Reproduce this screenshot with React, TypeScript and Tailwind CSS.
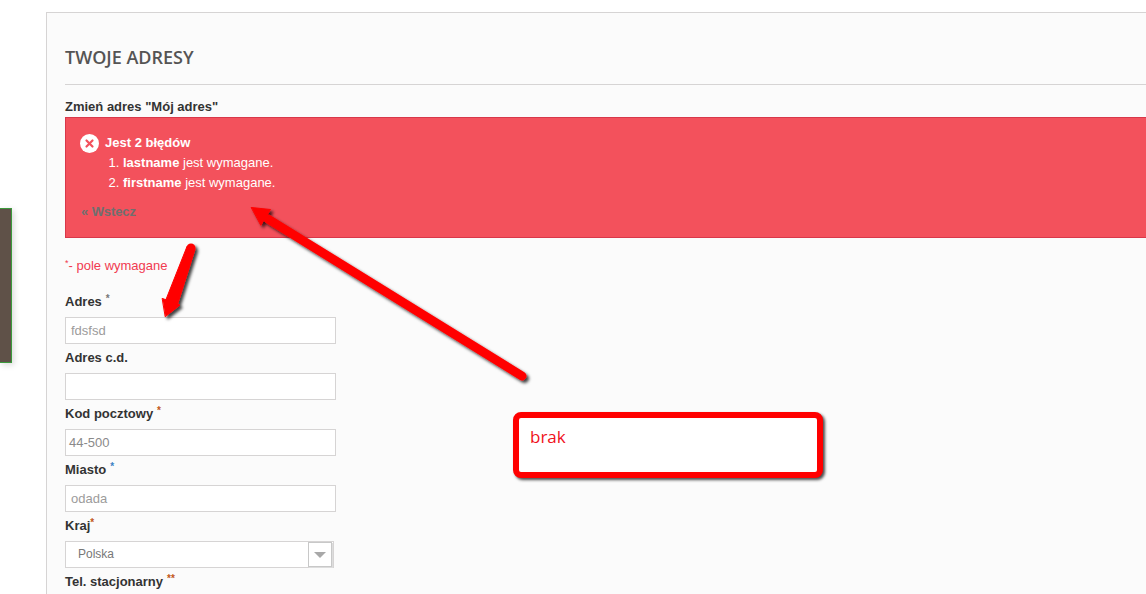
import React from 'react';

const labelClass = 'text-[13px] font-bold text-[#333] leading-[18px] h-[29px] pt-[5px]';
const inputClass = 'w-[271px] h-[27px] border border-[#d6d4d4] bg-white flex items-center text-[13px]';

const Star = ({ text = '*', color = 'text-[#f13340]', gap = 'ml-[4px]' }: { text?: string; color?: string; gap?: string }) => (
  <sup className={`${gap} ${color} text-[10px] font-bold leading-none align-[-1px]`}>{text}</sup>
);

const Field = ({ label, value, star, pad = 'pl-[5px]', tone = 'text-[#9c9b9b]' }: { label: string; value: string; star: React.ReactNode; pad?: string; tone?: string }) => (
  <div>
    <div className={labelClass}>
      {label}
      {star}
    </div>
    <div className={`${inputClass} ${pad} ${tone}`}>{value}</div>
  </div>
);

const Annotations = () => (
  <svg className="absolute left-0 top-0 pointer-events-none" width="1146" height="594" viewBox="0 0 1146 594">
    <defs>
      <filter id="sh" x="-20%" y="-20%" width="140%" height="140%">
        <feDropShadow dx="2.5" dy="2.5" stdDeviation="1.5" floodColor="#000" floodOpacity="0.75" />
      </filter>
    </defs>
    <g filter="url(#sh)" fill="#ff0000" stroke="#ff0000" strokeLinecap="round" strokeLinejoin="round">
      <path d="M522 376 L268 219" strokeWidth="9" fill="none" />
      <path d="M251.500 207.500 L270.500 209.500 L261 225 Z" strokeWidth="1" />
      <path d="M191 248 L195 249.500 L177 306 L165 302 L187 246.500 Z" strokeWidth="1" />
      <circle cx="191" cy="248" r="4.500" strokeWidth="0" />
      <path d="M162.500 298.500 L180 305 L165.500 316.500 Z" strokeWidth="1" />
    </g>
  </svg>
);

export default function App() {
  return (
    <div className="relative w-[1146px] h-[594px] overflow-hidden bg-white flex font-['Liberation_Sans',Arial,sans-serif]">
      {/* left edge of the neighbouring column */}
      <div className="w-[46px] shrink-0 pt-[208px]">
        <div className="w-[12px] h-[155px] bg-[#5f5148] border border-l-0 border-[#3c9a3c] shadow-[2px_2px_6px_rgba(0,0,0,0.15)]" />
      </div>

      <div className="mt-[12px] w-[1200px] h-[700px] shrink-0 border border-[#d6d4d4] bg-[#fbfbfb] pl-[18px]">
        <h1 className="h-[72px] border-b border-[#d6d4d4] pt-[32px] text-[18px] leading-[25px] font-semibold text-[#555454] font-['Open_Sans',sans-serif]">
          TWOJE ADRESY
        </h1>
        <div className="h-[32px] pt-[13px] text-[13px] leading-[18px] font-bold text-[#333]">Zmień adres "Mój adres"</div>

        <div className="h-[121px] border border-[#d8384a] bg-[#f3515c] pl-[14px] pt-[15px] text-[13px] leading-[20px] text-white">
          <div className="flex items-center font-bold">
            <svg className="w-[19px] h-[19px] mr-[6px]" viewBox="0 0 19 19">
              <circle cx="9.500" cy="9.500" r="9.500" fill="#fff" />
              <path d="M6.500 6.500 L12.500 12.500 M12.500 6.500 L6.500 12.500" stroke="#f3515c" strokeWidth="2.200" strokeLinecap="round" />
            </svg>
            Jest 2 błędów
          </div>
          <ol className="pl-[43px] list-decimal">
            <li><b>lastname</b> jest wymagane.</li>
            <li><b>firstname</b> jest wymagane.</li>
          </ol>
          <div className="mt-[9px] ml-[1px] font-bold tracking-[-0.1px] text-[#6f6f6f]">« Wstecz</div>
        </div>

        <div className="h-[50px] pt-[18px] text-[13px] leading-[20px] text-[#f13a50]">
          <sup className="text-[9px] leading-none align-[0px]">*</sup>- pole wymagane
        </div>

        <Field label="Adres" value="fdsfsd" star={<Star color="text-[#777]" />} />
        <Field label="Adres c.d." value="" star={null} />
        <Field label="Kod pocztowy" value="44-500" star={<Star color="text-[#c2571a]" />} pad="pl-[3px]" tone="text-[#8a8a8a]" />
        <Field label="Miasto" value="odada" star={<Star color="text-[#3b82c4]" />} />

        <div className={labelClass}>
          Kraj
          <Star color="text-[#c2571a]" gap="ml-0" />
        </div>
        <div className="w-[269px] h-[27px] border border-[#d6d4d4] bg-white flex items-center pl-[12px] pb-[2px] text-[12px] text-[#777]">
          <span className="flex-1">Polska</span>
          <span className="w-[24px] h-[25px] mt-[2px] border border-[#c8c8c8] flex items-center justify-center mr-[1px] shadow-[1px_1px_0_#ddd]">
            <svg width="12" height="6" viewBox="0 0 12 6"><path d="M0 0 H12 L6 6 Z" fill="#a8a8a8" /></svg>
          </span>
        </div>
        <div className={labelClass}>
          Tel. stacjonarny
          <Star text="**" color="text-[#c2571a]" gap="ml-[4px]" />
        </div>
      </div>

      <Annotations />

      <div className="absolute left-[513px] top-[412px] w-[310px] h-[66px] rounded-[8px] border-[6px] border-[#ff0000] bg-white pl-[11px] pt-[7px] text-[17px] leading-[24px] text-[#f01020] font-['Open_Sans',sans-serif] shadow-[2px_2px_3px_rgba(0,0,0,0.7)]">
        brak
      </div>
    </div>
  );
}
